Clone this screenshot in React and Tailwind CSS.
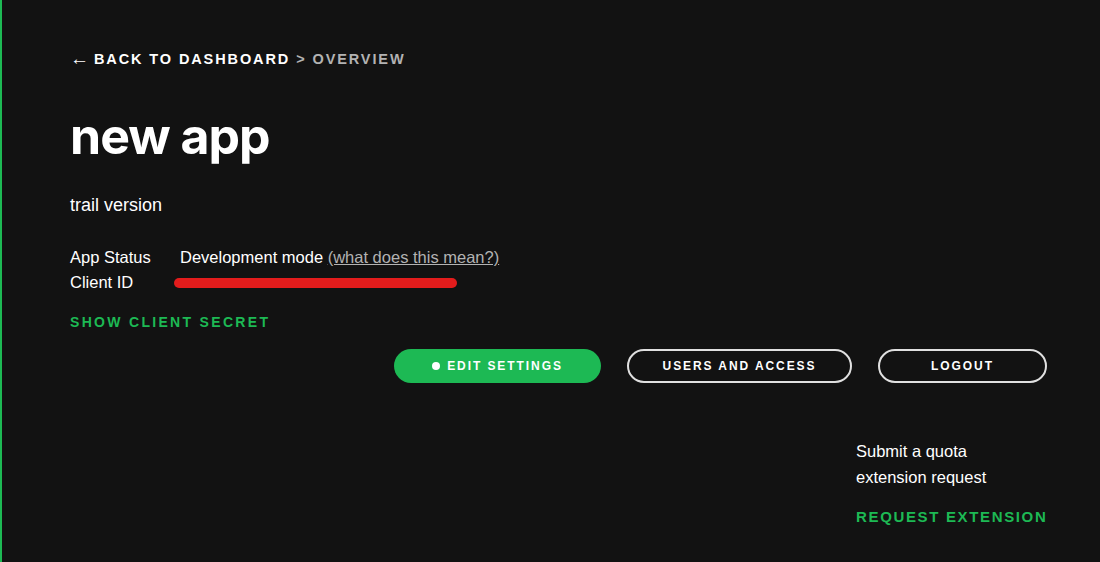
import React from 'react';

export default function App() {
  return (
    <div className="min-h-[562px] w-[1100px] bg-[#121212] border-l-2 border-[#1db954] text-white font-['Liberation_Sans',Arial,sans-serif]">
      <div className="pl-[68px] pr-[53px] pt-[50px]">
        {/* Breadcrumb */}
        <div className="flex items-center text-[14.5px] font-bold uppercase tracking-[0.13em] leading-[18px]">
          <span className="mr-[5px] text-[19px] leading-[18px] tracking-normal">←</span>
          <span>Back to Dashboard</span>
          <span className="mx-[6px] text-[#b3b3b3]">&gt;</span>
          <span className="text-[#b3b3b3]">Overview</span>
        </div>

        {/* Title */}
        <h1 className="mt-[40px] text-[50px] font-bold leading-[56px] tracking-[-0.02em] font-['Inter','Liberation_Sans',sans-serif]">new app</h1>

        <p className="mt-[30px] text-[18px] leading-[22px]">trail version</p>

        {/* Details */}
        <div className="mt-[29px] text-[16.5px] leading-[25px]">
          <div className="flex">
            <span className="w-[110px]">App Status</span>
            <span>
              Development mode{' '}
              <a className="text-[#b3b3b3] underline">(what does this mean?)</a>
            </span>
          </div>
          <div className="flex items-center">
            <span className="w-[104px]">Client ID</span>
            <span className="h-[10px] w-[283px] rounded-full bg-[#e31c1c]"></span>
          </div>
        </div>

        <div className="mt-[18px] text-[14px] font-bold uppercase tracking-[0.165em] text-[#1db954] leading-[18px]">
          Show client secret
        </div>

        {/* Buttons */}
        <div className="mt-[18px] flex justify-end gap-[26px]">
          <button className="flex h-[34px] w-[207px] items-center justify-center gap-[7px] rounded-full bg-[#1db954] text-[12px] font-bold uppercase tracking-[0.16em]">
            <span className="h-[8px] w-[8px] rounded-full bg-white"></span>
            Edit Settings
          </button>
          <button className="h-[34px] w-[225px] rounded-full border-2 border-[#e0e0e0] text-[12px] font-bold uppercase tracking-[0.16em]">
            Users and Access
          </button>
          <button className="h-[34px] w-[169px] rounded-full border-2 border-[#e0e0e0] text-[12px] font-bold uppercase tracking-[0.16em]">
            Logout
          </button>
        </div>

        {/* Quota */}
        <div className="mt-[55px] flex justify-end">
          <div className="w-[191px]">
            <p className="w-[150px] text-[16.5px] leading-[26px]">Submit a quota extension request</p>
            <div className="mt-[17px] whitespace-nowrap text-[15px] font-bold uppercase tracking-[0.11em] text-[#1db954] leading-[20px]">
              Request extension
            </div>
          </div>
        </div>
      </div>
    </div>
  );
}
